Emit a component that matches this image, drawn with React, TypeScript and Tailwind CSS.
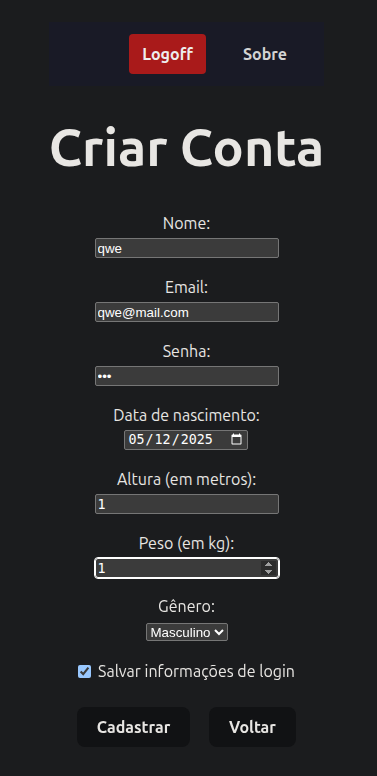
import React from "react";

const sans = "font-['Ubuntu','Lato','Noto_Sans',sans-serif]";

function Field({ label, children, className = "" }: { label: string; children: React.ReactNode; className?: string }) {
  return (
    <div className={"flex flex-col items-center " + className}>
      <label className="h-6 leading-6 text-[16px]">{label}</label>
      {children}
    </div>
  );
}

const textInput =
  "mt-[3px] h-5 w-[184px] rounded-[2px] border border-[#767676] bg-[#3b3b3b] px-[2px] text-[13.333px] text-white font-['Liberation_Sans',Arial,sans-serif] outline-none";

export default function App() {
  return (
    <div className={"min-h-screen bg-[#1b1c1e] text-[#e8e6e3] [color-scheme:dark] " + sans}>
      <div className="w-[373px] flex flex-col items-center pt-[22px]">
        <nav className="flex h-[64px] w-[275px] items-center justify-end gap-[25px] bg-[#191a26] pr-[25px]">
          <button className="h-10 w-[77px] rounded-[4px] bg-[#a91a1a] text-[16px] font-bold text-[#eeeeee]">Logoff</button>
          <button className="h-10 w-[68px] text-[16px] font-bold text-[#d3d3d3]">Sobre</button>
        </nav>
        <h1 className="mt-[31px] h-[60px] leading-[60px] text-[52px] font-bold text-[#e8e6e3]">Criar Conta</h1>
        <div className="mt-[34px] flex flex-col items-center">
          <Field label="Nome:">
            <input className={textInput} defaultValue="qwe" />
          </Field>
          <Field label="Email:" className="mt-[17px]">
            <input className={textInput} defaultValue="qwe@mail.com" />
          </Field>
          <Field label="Senha:" className="mt-[17px]">
            <input type="password" className={textInput} defaultValue="qwe" />
          </Field>
          <Field label="Data de nascimento:" className="mt-[17px]">
            <input
              type="date"
              defaultValue="2025-05-12"
              className="mt-[3px] h-5 w-[124px] rounded-[2px] border border-[#767676] bg-[#3b3b3b] px-[2px] text-[13.333px] text-white font-['DejaVu_Sans_Mono',monospace] outline-none"
            />
          </Field>
          <Field label="Altura (em metros):" className="mt-[17px]">
            <input
              type="number"
              defaultValue="1"
              className="mt-[3px] h-5 w-[184px] rounded-[2px] border border-[#767676] bg-[#3b3b3b] px-[2px] text-[13.333px] text-white font-['DejaVu_Sans_Mono',monospace] outline-none"
            />
          </Field>
          <Field label="Peso (em kg):" className="mt-[17px]">
            <input
              type="number"
              defaultValue="1"
              autoFocus
              className="mt-[3px] h-5 w-[184px] rounded-[3px] border border-white bg-[#3b3b3b] px-[2px] text-[13.333px] text-white font-['DejaVu_Sans_Mono',monospace] outline outline-1 outline-white"
            />
          </Field>
          <Field label="Gênero:" className="mt-[16px]">
            <select className="mt-[5px] h-[18px] w-[82px] rounded-[2px] border border-[#767676] bg-[#3b3b3b] text-[13.333px] text-white font-['Liberation_Sans',Arial,sans-serif]">
              <option>Masculino</option>
              <option>Feminino</option>
              <option>Outro</option>
            </select>
          </Field>
          <label className="mt-[18px] flex h-6 items-center gap-[7px] text-[16px]">
            <input type="checkbox" defaultChecked className="m-0 h-[13px] w-[13px]" />
            <span>Salvar informações de login</span>
          </label>
          <div className="mt-[24px] flex gap-[19px]">
            <button className="h-10 w-[113px] rounded-[8px] bg-[#111214] text-[16px] font-bold text-[#e8e6e3]">Cadastrar</button>
            <button className="h-10 w-[87px] rounded-[8px] bg-[#111214] text-[16px] font-bold text-[#e8e6e3]">Voltar</button>
          </div>
        </div>
      </div>
    </div>
  );
}
